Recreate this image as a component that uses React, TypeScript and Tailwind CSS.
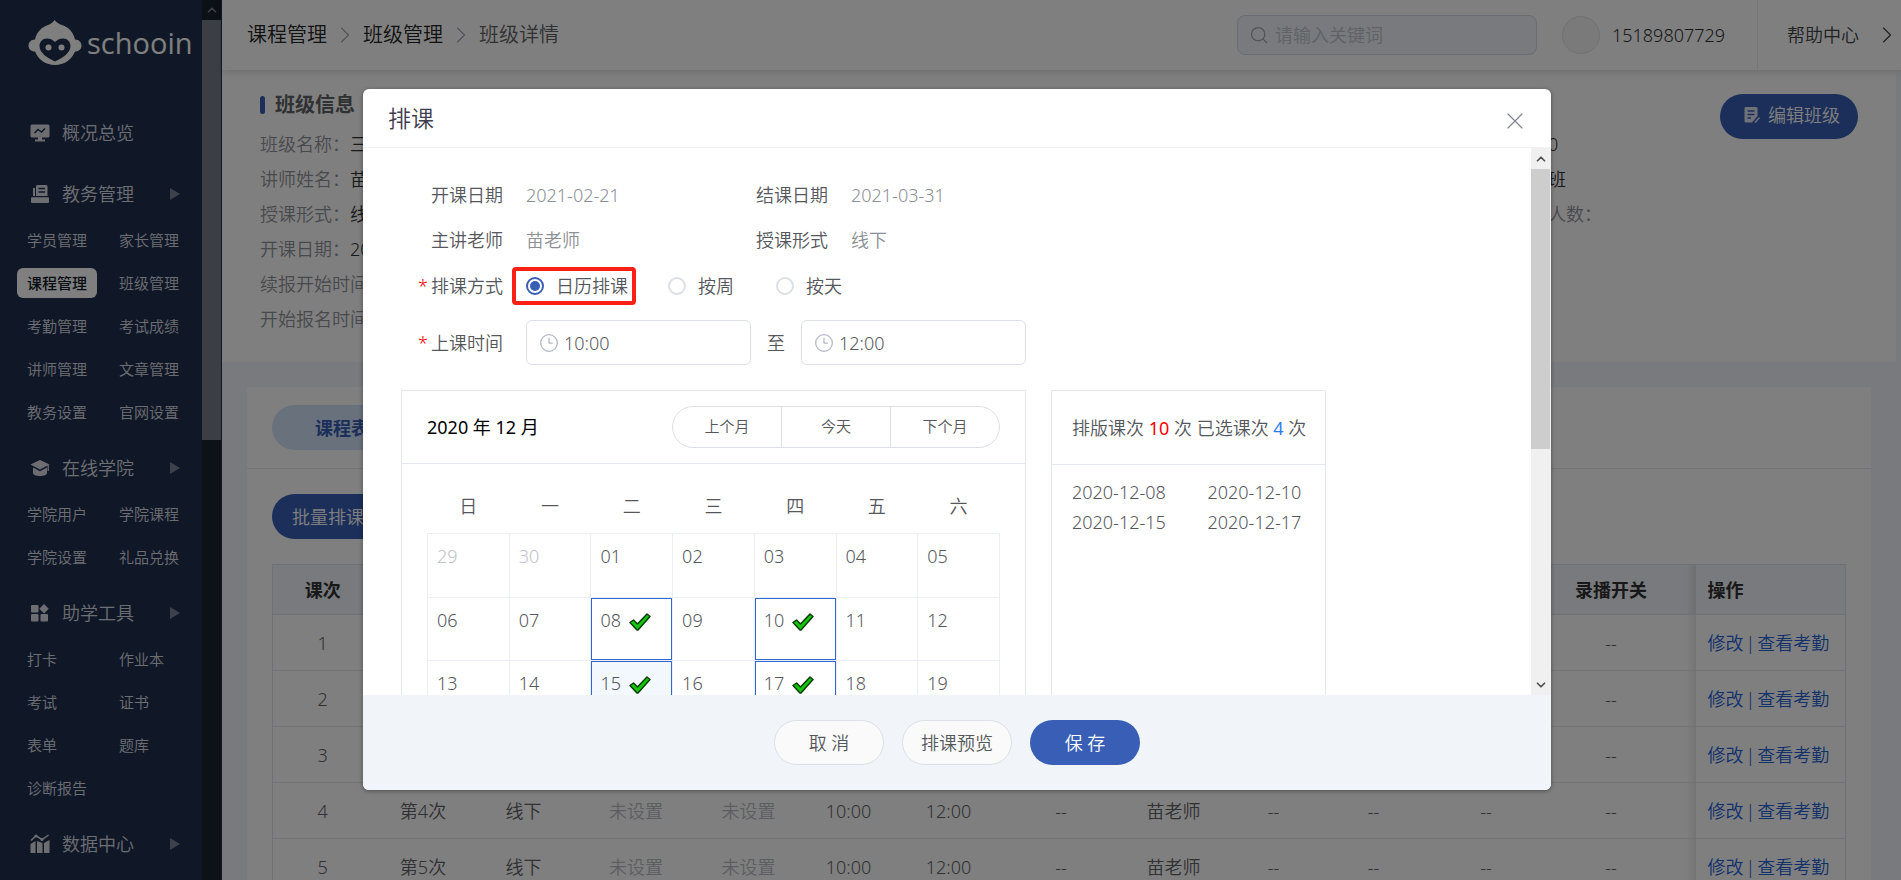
import React from 'react';
import { ChevronDown, ChevronRight, ChevronUp, Clock3, Search, X } from 'lucide-react';
import clsx from 'clsx';

type IconName = 'overview' | 'academic' | 'online' | 'tools' | 'data';

interface MenuSection {
  title: string;
  icon: IconName;
  items: string[];
}

const MENU: MenuSection[] = [
  {
    title: '教务管理',
    icon: 'academic',
    items: [
      '学员管理', '家长管理', '课程管理', '班级管理', '考勤管理',
      '考试成绩', '讲师管理', '文章管理', '教务设置', '官网设置',
    ],
  },
  { title: '在线学院', icon: 'online', items: ['学院用户', '学院课程', '学院设置', '礼品兑换'] },
  { title: '助学工具', icon: 'tools', items: ['打卡', '作业本', '考试', '证书', '表单', '题库', '诊断报告'] },
  { title: '数据中心', icon: 'data', items: [] },
];

const CLASS_INFO = [
  ['班级名称：', '三年级'],
  ['讲师姓名：', '苗老师'],
  ['授课形式：', '线下'],
  ['开课日期：', '2021-02-21'],
  ['续报开始时间：', ''],
  ['开始报名时间：', ''],
];

const CLASS_EXTRA = [
  ['课程价格：', '0'],
  ['班级类型：', '班'],
  ['最多可招生人数：', ''],
];

const COLUMNS = [
  { title: '课次', width: 'w-[100px]' },
  { title: '课次名称', width: 'w-[101px]' },
  { title: '形式', width: 'w-[100px]' },
  { title: '课件', width: 'w-[125px]' },
  { title: '作业', width: 'w-[100px]' },
  { title: '开始', width: 'w-[100px]' },
  { title: '结束', width: 'w-[100px]' },
  { title: '教室', width: 'w-[125px]' },
  { title: '讲师', width: 'w-[100px]' },
  { title: '助教', width: 'w-[100px]' },
  { title: '签到', width: 'w-[100px]' },
  { title: '直播', width: 'w-[125px]' },
  { title: '录播开关', width: 'w-[147px]' },
];

const LESSONS = [1, 2, 3, 4, 5].map((n) => [
  String(n), `第${n}次`, '线下', '未设置', '未设置', '10:00', '12:00', '--', '苗老师', '--', '--', '--', '--',
]);

const WEEKDAYS = ['日', '一', '二', '三', '四', '五', '六'];

const WEEKS = [
  ['29', '30', '01', '02', '03', '04', '05'],
  ['06', '07', '08', '09', '10', '11', '12'],
  ['13', '14', '15', '16', '17', '18', '19'],
];

const SELECTED = ['08', '10', '15', '17'];
const TODAY = '15';

const FIXED_SHADE = 'pr-[22px] bg-[linear-gradient(to_left,rgba(0,0,0,0.09),transparent_10px)]';

const Logo: React.FC = () => (
  <div className="flex items-center gap-[5px] pl-7 pt-5 text-white">
    <svg viewBox="0 0 54 46" className="h-[46px] w-[54px]" aria-hidden="true">
      <path
        fill="currentColor"
        d="M26.500 0C28.500 2.500 31 4 34 5C41 7.500 45.500 12.500 47 19.500C51 19.500 53.500 22.500 53.500 25.500C53.500 29 51 31.500 47 31.500C43.500 40 36 45 27 45C18 45 10.500 40 7 31.500C3 31.500 0.500 29 0.500 25.500C0.500 22.500 3 19.500 7 19.500C8.500 12.500 13.500 7 20 5C22.500 4 25 2.500 26.500 0Z"
      />
      <path
        fill="#213050"
        d="M27 22C24.500 19.500 22 18.500 19 18.500C14.500 18.500 11.500 22 11.500 26C11.500 32.500 19 38 27 41.500C35 38 42.500 32.500 42.500 26C42.500 22 39.500 18.500 35 18.500C32 18.500 29.500 19.500 27 22Z"
      />
      <circle cx="20.500" cy="27.500" r="3" fill="currentColor" />
      <circle cx="33.500" cy="27.500" r="3" fill="currentColor" />
    </svg>
    <span className="font-['Open_Sans',sans-serif] text-[29px] font-normal leading-[46px]">schooin</span>
  </div>
);

const MenuIcon: React.FC<{ name: IconName }> = ({ name }) => (
  <svg viewBox="0 0 20 20" className="h-5 w-5 shrink-0" fill="currentColor" aria-hidden="true">
    {name === 'overview' && (
      <>
        <rect x="0.500" y="1.500" width="19" height="13" rx="1.500" />
        <path d="M8 14H12V16.500H15V18.500H5V16.500H8Z" />
        <path d="M4.500 10L8 6.500L11.500 9L15 5.500" fill="none" stroke="#213050" strokeWidth="1.500" />
      </>
    )}
    {name === 'academic' && (
      <>
        <path d="M7.500 1H16C16.800 1 17.500 1.700 17.500 2.500V12H6V2.500C6 1.700 6.700 1 7.500 1Z" />
        <path d="M3 4H5V12H3Z" />
        <rect x="1" y="13.200" width="18" height="5.800" rx="1" />
        <path d="M8.500 4.500H15M8.500 8H15" stroke="#213050" strokeWidth="1.500" />
      </>
    )}
    {name === 'online' && (
      <>
        <path d="M10 2L19.500 6.500L10 11.500L0.500 6.500Z" />
        <path d="M3 9.500L10 13.200L17 9.500V15C17 16.700 14 18 10 18C6 18 3 16.700 3 15Z" />
        <path d="M18.200 7V13" stroke="currentColor" strokeWidth="1.300" />
      </>
    )}
    {name === 'tools' && (
      <>
        <rect x="1" y="2" width="7.500" height="7.500" rx="1" />
        <path d="M14 1L18.700 5.700L14 10.400L9.300 5.700Z" />
        <rect x="1" y="11" width="7.500" height="7.500" rx="1" />
        <rect x="10.500" y="11" width="7.500" height="7.500" rx="1" />
      </>
    )}
    {name === 'data' && (
      <>
        <path d="M1 6.500L6 1.800L12 5.500L18.500 1" fill="none" stroke="currentColor" strokeWidth="1.500" />
        <circle cx="6" cy="2" r="1.500" />
        <circle cx="12" cy="5.500" r="1.500" />
        <path d="M0.500 10L5.500 7V19H0.500ZM7 7L12.500 9V19H7ZM14 9L19.500 6V19H14Z" />
      </>
    )}
  </svg>
);

const Sidebar: React.FC = () => (
  <aside className="flex w-[222px] shrink-0 bg-[#213050]">
    <nav className="w-[202px] text-[#d9dce2]">
      <Logo />
      <a href="#" className="mt-11 flex h-[46px] items-center gap-3 pl-[30px] text-lg">
        <MenuIcon name="overview" />
        概况总览
      </a>
      <div className="pt-[3px]">
        {MENU.map((section) => (
          <div key={section.title} className="pt-[11px]">
            <div className="flex h-12 items-center gap-3 pl-[30px] text-lg">
              <MenuIcon name={section.icon} />
              {section.title}
              <svg viewBox="0 0 10 14" className="ml-auto mr-[22px] h-3.5 w-2.5" aria-hidden="true">
                <path d="M0 1V13L10 7Z" fill="#7a8296" />
              </svg>
            </div>
            <div className="grid grid-cols-[92px_92px] pl-[17px]">
              {section.items.map((item) => (
                <div key={item} className="flex h-[43px] items-center">
                  <a
                    href="#"
                    className={clsx(
                      'h-[30px] whitespace-nowrap rounded-md px-2.5 text-[15px] leading-[30px]',
                      item === '课程管理' && 'bg-white font-medium text-[#111827]'
                    )}
                  >
                    {item}
                  </a>
                </div>
              ))}
            </div>
          </div>
        ))}
      </div>
    </nav>
    <div className="w-5 border-r border-[#213050] bg-[#18242f]">
      <div className="flex h-5 items-center justify-center bg-[#18202e] text-[#787d8c]">
        <ChevronUp size={14} strokeWidth={3} />
      </div>
      <div className="h-[420px] bg-[#787d8c]" />
    </div>
  </aside>
);

const Header: React.FC = () => (
  <header className="relative flex h-[70px] shrink-0 items-center bg-white pl-[25px] shadow-[0_2px_8px_rgba(0,0,0,0.15)]">
    <nav className="flex items-center gap-1 text-xl text-[#222]">
      <a href="#">课程管理</a>
      <ChevronRight size={28} strokeWidth={1} className="text-[#a4a8b4]" />
      <a href="#">班级管理</a>
      <ChevronRight size={28} strokeWidth={1} className="text-[#a4a8b4]" />
      <span className="text-[#606266]">班级详情</span>
    </nav>
    <label className="ml-auto flex h-10 w-[300px] items-center gap-1.5 rounded-lg border border-[#d3d8e6] bg-[#f1f5fa] pl-[11px]">
      <Search size={20} strokeWidth={1.5} className="shrink-0 text-[#a0a4ac]" />
      <input
        type="search"
        aria-label="请输入关键词"
        placeholder="请输入关键词"
        className="w-full bg-transparent text-lg outline-none placeholder:text-[#c0c4cc]"
      />
    </label>
    <span className="ml-[25px] h-[38px] w-[38px] rounded-full border border-[#e0e2ea] bg-[#f5f5f5]" />
    <span className="ml-3 w-[145px] text-lg text-[#303133]">15189807729</span>
    <div className="flex h-full w-36 items-center justify-between border-l border-[#ebeef5] pl-[29px] text-lg text-[#404246]">
      <a href="#">帮助中心</a>
      <ChevronRight size={28} strokeWidth={1} />
    </div>
  </header>
);

const ClassInfo: React.FC = () => (
  <section className="mr-[5px] flex h-[292px] shrink-0 items-start bg-white pl-[38px] pt-[17px] text-lg">
    <div className="w-[1198px]">
      <h2 className="flex h-9 items-center gap-2.5 text-xl font-bold text-[#606266]">
        <span className="h-[18px] w-[5px] rounded-sm bg-[#385fb5]" />
        班级信息
      </h2>
      <div className="pt-1">
        {CLASS_INFO.map(([label, value]) => (
          <p key={label} className="h-[35px] leading-[35px] text-[#303133]">
            <span className="text-[#909399]">{label}</span>
            {value}
          </p>
        ))}
      </div>
    </div>
    <div className="pt-10">
      {CLASS_EXTRA.map(([label, value]) => (
        <p key={label} className="h-[35px] leading-[35px] text-[#303133]">
          <span className="text-[#909399]">{label}</span>
          {value}
        </p>
      ))}
    </div>
    <button
      type="button"
      className="ml-auto mr-[38px] mt-[7px] flex h-[45px] w-[138px] items-center justify-center gap-2 rounded-full bg-[#385fb5] pb-1 pl-1.5 text-white"
    >
      <svg viewBox="0 0 16 16" className="h-4 w-4 shrink-0" aria-hidden="true">
        <path fill="#dfe5f2" d="M2 0H12C12.800 0 13.500 0.700 13.500 1.500V9L8 15.500H2C1 15.500 0.500 15 0.500 14V1.500C0.500 0.700 1 0 2 0Z" />
        <path stroke="#385fb5" strokeWidth="1.300" d="M3.500 4H10.500M3.500 7.500H10.500M3.500 11H7" />
        <path stroke="#dfe5f2" strokeWidth="1.500" d="M11 15.500L15.500 10.500" />
      </svg>
      编辑班级
    </button>
  </section>
);

const LessonTable: React.FC = () => (
  <table className="w-full table-fixed border-collapse border border-[#dfe3ea] text-lg">
    <thead>
      <tr className="h-[50px] bg-[#f1f5fa] text-[#303133]">
        {COLUMNS.map((col, i) => (
          <th
            key={col.title}
            className={clsx('border-b border-[#dfe3ea] font-bold', col.width, i === COLUMNS.length - 1 && FIXED_SHADE)}
          >
            {col.title}
          </th>
        ))}
        <th className="border-b border-[#dfe3ea] pl-3 text-left font-bold">操作</th>
      </tr>
    </thead>
    <tbody>
      {LESSONS.map((row) => (
        <tr key={row[0]} className="h-14 text-center text-[#606266]">
          {row.map((cell, i) => (
            <td
              key={i}
              className={clsx(
                'border-b border-[#e4e7ed]',
                cell === '未设置' && 'text-[#b9bcc4]',
                i === row.length - 1 && FIXED_SHADE
              )}
            >
              {cell}
            </td>
          ))}
          <td className="border-b border-[#e4e7ed] pl-3 text-[#2563d6]">
            <div className="flex gap-0.5 whitespace-nowrap">
              <a href="#">修改</a>
              <span>|</span>
              <a href="#">查看考勤</a>
            </div>
          </td>
        </tr>
      ))}
    </tbody>
  </table>
);

const LessonCard: React.FC = () => (
  <section className="ml-[25px] mr-[30px] mt-[25px] min-h-0 flex-1 bg-white">
    <div className="flex h-[82px] items-center border-b border-[#e4e7ed] pl-[25px]">
      <button type="button" className="h-[45px] w-[140px] rounded-full bg-[#d3e2fb] text-lg font-bold text-[#385fb5]">
        课程表
      </button>
    </div>
    <div className="px-[25px] pt-[25px]">
      <button type="button" className="h-[45px] rounded-full bg-[#385fb5] px-5 text-lg text-white">
        批量排课
      </button>
      <div className="pt-[25px]">
        <LessonTable />
      </div>
    </div>
  </section>
);

const CheckMark: React.FC = () => (
  <svg viewBox="0 0 22 18" className="h-[18px] w-[22px]" aria-hidden="true">
    <path d="M1 9.500L4.500 7L8.500 11L18 1L21 3.500L9 17H8Z" fill="#16c60c" stroke="#0b3d0b" strokeWidth="1.500" strokeLinejoin="round" />
  </svg>
);

const Field: React.FC<{ label: string; value: string }> = ({ label, value }) => (
  <div className="flex w-[325px] items-center">
    <span className="w-[95px]">{label}</span>
    <span className="text-[#8c8f96]">{value}</span>
  </div>
);

const Radio: React.FC<{ label: string; checked?: boolean }> = ({ label, checked }) => (
  <label className="flex items-center gap-3">
    <input
      type="radio"
      name="mode"
      defaultChecked={checked}
      className="h-[18px] w-[18px] appearance-none rounded-full border-2 border-[#dcdfe6] checked:border-[#385fb5] checked:bg-[#385fb5] checked:bg-clip-content checked:p-[2px]"
    />
    {label}
  </label>
);

const TimeInput: React.FC<{ label: string; value: string }> = ({ label, value }) => (
  <label className="flex h-[45px] w-[225px] items-center gap-[5px] rounded-md border border-[#dcdfe6] pl-3">
    <Clock3 size={20} strokeWidth={1.5} className="shrink-0 text-[#b4b8c2]" />
    <input type="text" aria-label={label} defaultValue={value} className="w-full bg-transparent outline-none" />
  </label>
);

const Calendar: React.FC = () => (
  <div className="w-[625px] border border-[#e4e7ed]">
    <div className="flex h-[73px] items-center justify-between border-b border-[#e4e7ed] px-[25px]">
      <span className="font-normal text-black">2020 年 12 月</span>
      <div className="flex h-[42px] w-[328px] divide-x divide-[#dcdfe6] rounded-full border border-[#dcdfe6] text-[15px]">
        <button type="button" className="flex-1">上个月</button>
        <button type="button" className="flex-1">今天</button>
        <button type="button" className="flex-1">下个月</button>
      </div>
    </div>
    <div className="px-[25px] pt-[15px]">
      <table className="w-full table-fixed border-collapse">
        <thead>
          <tr className="h-[54px]">
            {WEEKDAYS.map((day) => (
              <th key={day} className="font-[350]">{day}</th>
            ))}
          </tr>
        </thead>
        <tbody>
          {WEEKS.map((week, w) => (
            <tr key={week[0]}>
              {week.map((day, d) => (
                <td key={day} className="border border-[#ebeef5] p-0 align-top">
                  <div
                    className={clsx(
                      'flex items-start gap-2 border px-2 pt-[7px]',
                      w === 0 ? 'h-[63px]' : 'h-[62px]',
                      SELECTED.includes(day) ? 'border-[#2f66d0]' : 'border-transparent',
                      day === TODAY && 'bg-[#f2f8fe]',
                      w === 0 && d < 2 && 'text-[#c0c4cc]'
                    )}
                  >
                    <span className="leading-7">{day}</span>
                    {SELECTED.includes(day) && (
                      <span className="pt-[7px]">
                        <CheckMark />
                      </span>
                    )}
                  </div>
                </td>
              ))}
            </tr>
          ))}
        </tbody>
      </table>
    </div>
  </div>
);

const SelectedDates: React.FC = () => (
  <div className="w-[275px] border border-[#e4e7ed]">
    <p className="flex h-[74px] items-center whitespace-pre border-b border-[#e4e7ed] pl-5">
      排版课次 <span className="font-normal text-[#f00]">10</span> 次 已选课次{' '}
      <span className="font-normal text-[#2d7cf6]">4</span> 次
    </p>
    <ul className="grid grid-cols-2 pl-5 pt-3 leading-[30px]">
      {SELECTED.map((day) => (
        <li key={day} className="even:pl-[9px]">2020-12-{day}</li>
      ))}
    </ul>
  </div>
);

const ScheduleDialog: React.FC = () => (
  <div
    role="dialog"
    aria-label="排课"
    className="flex max-h-[calc(100vh-179px)] w-[1188px] flex-col overflow-hidden rounded-md bg-white text-lg text-[#55575c] shadow-[0_1px_4px_rgba(0,0,0,0.4)]"
  >
    <div className="flex h-[59px] shrink-0 items-center justify-between border-b border-[#f0f1f5] pl-[25px] pr-[22px]">
      <h1 className="pt-0.5 text-[23px] text-[#3f3d50]">排课</h1>
      <button type="button" aria-label="关闭" className="pt-1.5 text-[#808390]">
        <X size={28} strokeWidth={1} />
      </button>
    </div>
    <div className="flex min-h-0 flex-1">
      <div className="min-w-0 flex-1 overflow-hidden pl-[38px] pt-6">
        <div className="flex h-[45px] pl-[30px]">
          <Field label="开课日期" value="2021-02-21" />
          <Field label="结课日期" value="2021-03-31" />
        </div>
        <div className="flex h-[45px] pl-[30px]">
          <Field label="主讲老师" value="苗老师" />
          <Field label="授课形式" value="线下" />
        </div>
        <div className="flex h-12 items-center pl-[17px]">
          <span className="w-[13px] text-[#f00]">*</span>
          <span className="w-[81px]">排课方式</span>
          <div className="flex h-[38px] items-center rounded-sm border-4 border-[#fb2015] pl-2.5 pr-1">
            <Radio label="日历排课" checked />
          </div>
          <div className="flex gap-[42px] pl-8">
            <Radio label="按周" />
            <Radio label="按天" />
          </div>
        </div>
        <div className="flex items-center pl-[17px] pt-2.5">
          <span className="w-[13px] text-[#f00]">*</span>
          <span className="w-[95px]">上课时间</span>
          <TimeInput label="开始时间" value="10:00" />
          <span className="w-[50px] text-center">至</span>
          <TimeInput label="结束时间" value="12:00" />
        </div>
        <div className="flex h-[500px] gap-[25px] pt-[25px]">
          <Calendar />
          <SelectedDates />
        </div>
      </div>
      <div className="flex w-5 shrink-0 flex-col border-r border-[#f0f0f0] bg-[#f0f0f0] text-[#505050]">
        <div className="flex h-[21px] items-center justify-center">
          <ChevronUp size={14} strokeWidth={3} />
        </div>
        <div className="h-[280px] bg-[#cdcdcd]" />
        <div className="mt-auto flex h-[21px] items-center justify-center">
          <ChevronDown size={14} strokeWidth={3} />
        </div>
      </div>
    </div>
    <div className="flex h-[95px] shrink-0 items-center justify-center gap-[18px] bg-[#f1f5fa]">
      <button type="button" className="h-[45px] w-[110px] rounded-full border border-[#dcdfe6] bg-[#fafafa]">取 消</button>
      <button type="button" className="h-[45px] w-[110px] rounded-full border border-[#dcdfe6] bg-[#fafafa]">排课预览</button>
      <button type="button" className="h-[45px] w-[110px] rounded-full bg-[#385fb5] text-white">保 存</button>
    </div>
  </div>
);

export default function App() {
  return (
    <div className="relative h-screen overflow-hidden font-['Noto_Sans','Noto_Sans_CJK_SC',sans-serif] font-[350]">
      <div className="flex h-full">
        <Sidebar />
        <main className="flex min-w-0 flex-1 flex-col bg-[#f1f5fa]">
          <Header />
          <ClassInfo />
          <LessonCard />
        </main>
      </div>
      <div className="absolute inset-0 flex items-start justify-center bg-black/50 pl-[13px] pt-[89px]">
        <ScheduleDialog />
      </div>
    </div>
  );
}
